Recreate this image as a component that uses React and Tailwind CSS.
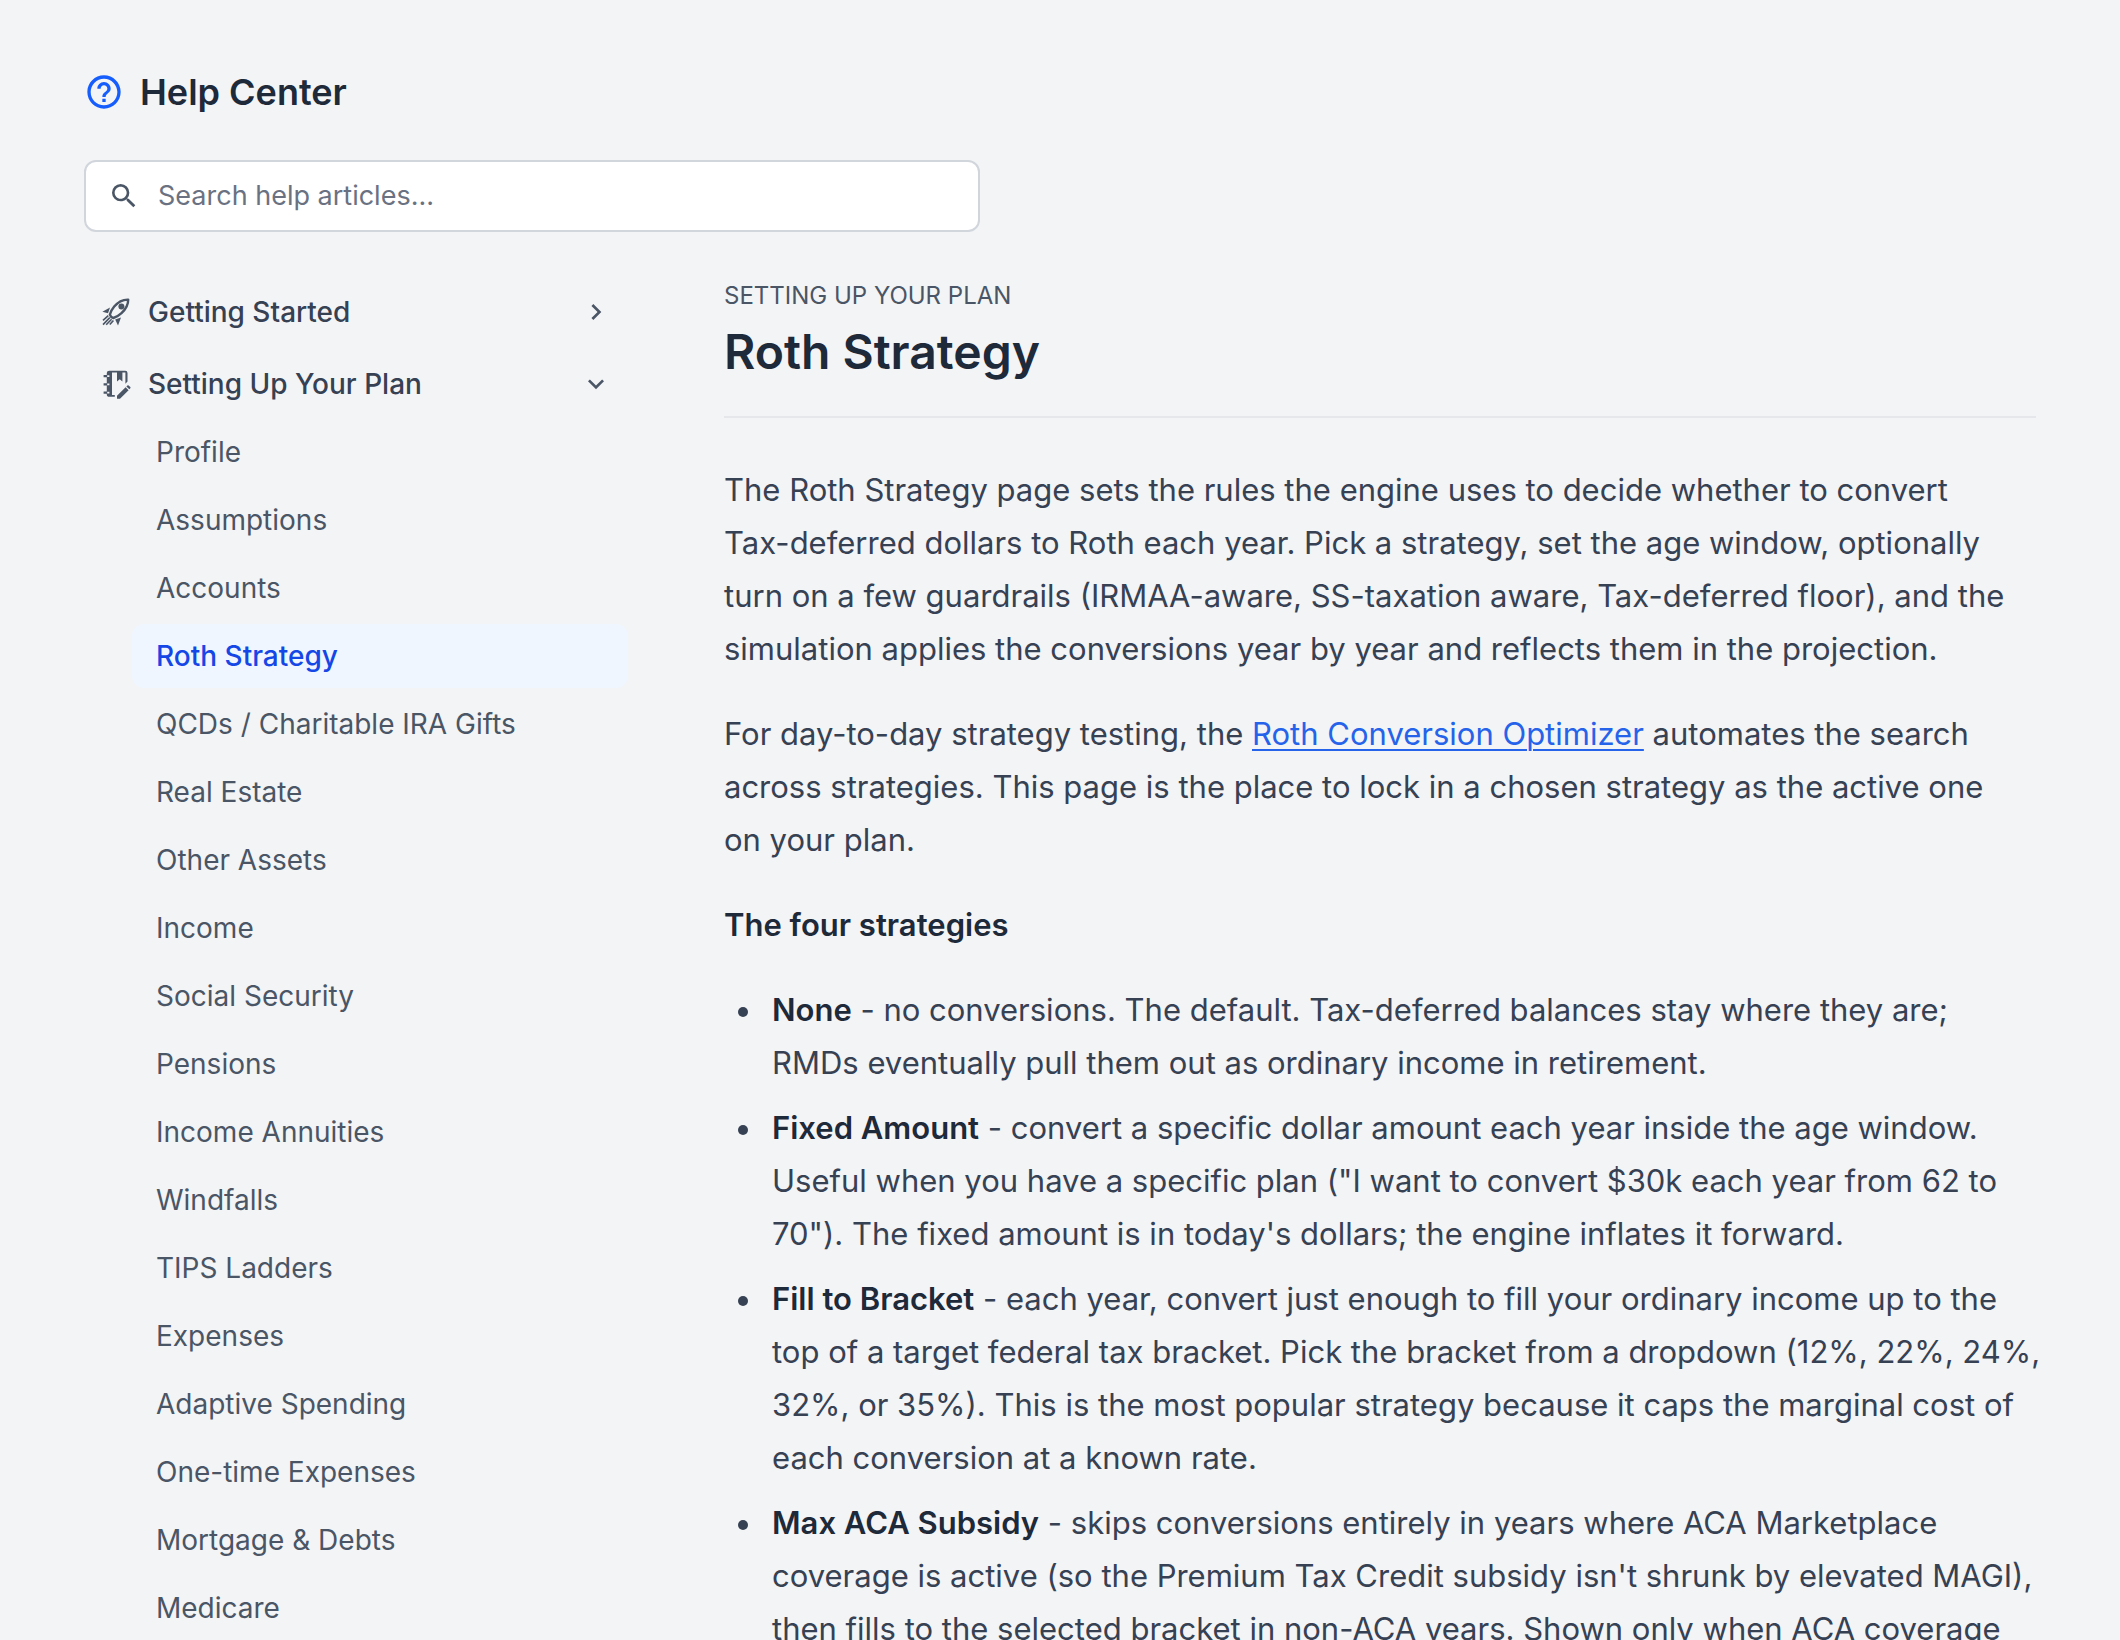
import React, { useState } from 'react';
import { MdChevronRight, MdExpandMore, MdHelpOutline, MdSearch } from 'react-icons/md';

function RocketIcon() {
  return (
    <svg viewBox="0 0 32 32" className="size-8 shrink-0 text-gray-600" fill="none" aria-hidden="true">
      <path
        d="M28.2 3.6C22.5 3.4 18 6 14.2 10.6C12 13.3 10.4 16.3 9.9 18.6C10.4 20.3 11.7 21.5 13.4 22C15.7 21.4 18.8 19.7 21.5 17.2C26 13.1 28.3 9.2 28.2 3.6Z"
        stroke="currentColor"
        strokeWidth="2.4"
        strokeLinejoin="round"
      />
      <circle cx="21.4" cy="10.4" r="3" fill="currentColor" />
      <path d="M2.4 15.8L10 11.6L8 17.2Z" fill="currentColor" />
      <path d="M21 21.4L18 29.6L15.2 23.4Z" fill="currentColor" />
      <path
        d="M8.3 19.6L3 24.4M9.8 21.6L3 28.6M11.6 23.2L6.2 28.8M13.4 24.4L9.8 28.6"
        stroke="currentColor"
        strokeWidth="1.6"
      />
    </svg>
  );
}

function NotebookIcon() {
  return (
    <svg viewBox="0 0 32 32" className="size-8 shrink-0 text-gray-600" fill="none" aria-hidden="true">
      <path
        fill="currentColor"
        fillRule="evenodd"
        d="M9.4 2.7H25.3Q27.5 2.7 27.5 4.9V13.6L25.4 15.8V4.6H22.4V13.4L19.7 11.2L17 13.4V4.6H12V27H14.8V28.8H9.4Q6.8 28.8 6.8 26.4V4.9Q6.8 2.7 9.4 2.7Z"
      />
      <path d="M3.6 8.2H8.4M3.6 16.4H8.4M3.6 24.6H8.4" stroke="currentColor" strokeWidth="2.2" />
      <path d="M7.2 8.2H9.4M7.2 16.4H9.4M7.2 24.6H9.4" stroke="#f3f4f6" strokeWidth="1.8" />
      <path
        fill="currentColor"
        d="M17 30.8V27.8L25.6 19.2L28.6 22.2L20 30.8ZM26.4 18.4L27.4 17.4Q28 16.9 28.6 17.4L30.3 19.1Q30.8 19.7 30.3 20.3L29.3 21.3Z"
      />
    </svg>
  );
}

const PLAN_PAGES = [
  'Profile',
  'Assumptions',
  'Accounts',
  'Roth Strategy',
  'QCDs / Charitable IRA Gifts',
  'Real Estate',
  'Other Assets',
  'Income',
  'Social Security',
  'Pensions',
  'Income Annuities',
  'Windfalls',
  'TIPS Ladders',
  'Expenses',
  'Adaptive Spending',
  'One-time Expenses',
  'Mortgage & Debts',
  'Medicare',
];

const STRATEGIES = [
  {
    name: 'None',
    text: 'no conversions. The default. Tax-deferred balances stay where they are; RMDs\u00a0eventually pull them out as ordinary income in retirement.',
  },
  {
    name: 'Fixed Amount',
    text: 'convert a specific dollar amount each year inside the age window. Useful when you have a specific plan ("I want to convert $30k each year from 62 to 70"). The fixed amount is in today\'s dollars; the engine inflates it forward.',
  },
  {
    name: 'Fill to Bracket',
    text: 'each year, convert just enough to fill your ordinary income up to the top of a target federal tax bracket. Pick the bracket from a dropdown (12%, 22%, 24%, 32%, or 35%). This is the most popular strategy because it caps the marginal cost of each conversion at a known rate.',
  },
  {
    name: 'Max ACA Subsidy',
    text: "skips conversions entirely in years where ACA Marketplace coverage is active (so the Premium Tax Credit subsidy isn't shrunk by elevated MAGI), then fills to the selected bracket in non-ACA years. Shown only when ACA coverage",
  },
];

function GroupButton({ icon, label, open }) {
  const Chevron = open ? MdExpandMore : MdChevronRight;
  return (
    <button
      type="button"
      aria-expanded={open}
      className="flex h-[72px] w-full items-center gap-4 rounded-xl px-4 text-left text-[28px] font-medium text-gray-700"
    >
      {icon}
      <span className="flex-1">{label}</span>
      <Chevron className="size-8 shrink-0 text-gray-600" aria-hidden="true" />
    </button>
  );
}

function Sidebar() {
  return (
    <nav aria-label="Help topics" className="w-[544px] shrink-0">
      <GroupButton icon={<RocketIcon />} label="Getting Started" open={false} />
      <GroupButton icon={<NotebookIcon />} label="Setting Up Your Plan" open />
      <ul className="flex flex-col gap-1 pl-12">
        {PLAN_PAGES.map((page) => {
          const active = page === 'Roth Strategy';
          return (
            <li key={page}>
              <a
                href="#"
                aria-current={active ? 'page' : undefined}
                className={
                  active
                    ? 'flex h-16 items-center rounded-xl bg-blue-50 px-6 text-[28px] font-medium text-blue-700'
                    : 'flex h-16 items-center rounded-xl px-6 text-[28px] text-gray-600'
                }
              >
                {page}
              </a>
            </li>
          );
        })}
      </ul>
    </nav>
  );
}

function Article() {
  return (
    <article className="min-w-0 flex-1 text-[31px] leading-[53px] text-gray-700">
      <header className="border-b-2 border-gray-200 pb-8">
        <p className="text-2xl leading-10 text-gray-600 uppercase">Setting Up Your Plan</p>
        <h2 className="mt-1 text-5xl leading-[64px] font-semibold text-gray-800">Roth Strategy</h2>
      </header>
      <div className="mt-[45px] flex flex-col gap-8">
        <p>
          The Roth Strategy page sets the rules the engine uses to decide whether to convert{' '}
          <span className="whitespace-nowrap">Tax-deferred</span> dollars to Roth each year. Pick a strategy,
          set the age window, optionally turn on a few guardrails (IRMAA-aware, SS-taxation aware, Tax-deferred
          floor), and the simulation applies the conversions year by year and reflects them in the projection.
        </p>
        <p>
          For day-to-day strategy testing, the{' '}
          <a href="#" className="text-[#2563eb] underline decoration-2 underline-offset-4">
            Roth Conversion Optimizer
          </a>{' '}
          automates the search across strategies. This page is the place to lock in a chosen strategy as the
          active one <span className="whitespace-nowrap">on your plan.</span>
        </p>
        <h3 className="font-semibold text-gray-800">The four strategies</h3>
        <ul className="-mr-2 flex flex-col gap-3 pl-12">
          {STRATEGIES.map(({ name, text }) => (
            <li
              key={name}
              className="relative before:absolute before:top-6 before:-left-[34px] before:size-[10px] before:rounded-full before:bg-gray-700"
            >
              <strong className="font-semibold text-gray-800">{name}</strong>
              {` - ${text}`}
            </li>
          ))}
        </ul>
      </div>
    </article>
  );
}

export default function App() {
  const [query, setQuery] = useState('');
  return (
    <div className="h-screen overflow-hidden bg-gray-100 px-[84px] pt-16 font-['Inter','Open_Sans',sans-serif]">
      <header className="flex h-14 items-center gap-4">
        <MdHelpOutline className="size-10 text-[#155dfc]" aria-hidden="true" />
        <h1 className="text-4xl font-semibold text-gray-800">Help Center</h1>
      </header>
      <label className="mt-10 flex h-18 max-w-4xl items-center gap-[18px] rounded-xl border-2 border-gray-300 bg-white px-[22px]">
        <MdSearch className="size-8 shrink-0 text-gray-600" aria-hidden="true" />
        <input
          type="text"
          value={query}
          onChange={(event) => setQuery(event.target.value)}
          placeholder="Search help articles..."
          aria-label="Search help articles"
          className="min-w-0 flex-1 bg-transparent text-[27px] text-gray-800 outline-none placeholder:text-gray-500"
        />
      </label>
      <main className="mt-11 flex items-start gap-24">
        <Sidebar />
        <Article />
      </main>
    </div>
  );
}
